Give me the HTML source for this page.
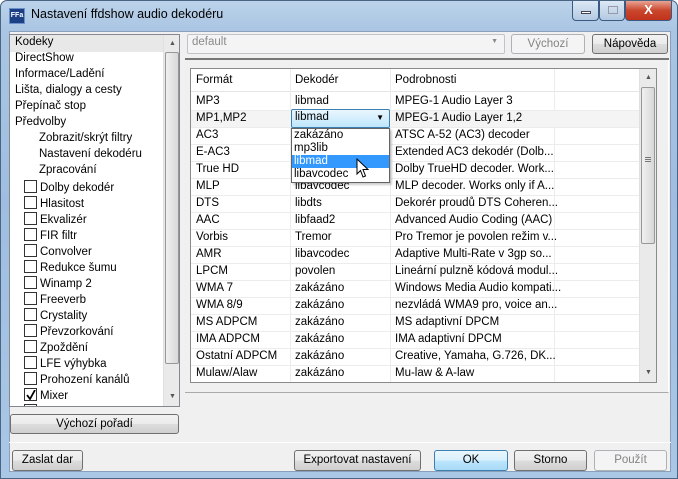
<!DOCTYPE html>
<html><head><meta charset="utf-8"><style>
*{box-sizing:border-box}
body{margin:0;width:678px;height:479px;overflow:hidden;font-family:"Liberation Sans",sans-serif;font-size:11.5px;color:#000;background:#fff}
.frame{position:absolute;left:0;top:0;width:678px;height:479px;background:linear-gradient(180deg,#bcd3ea 0,#a9c5e3 30px,#9fbde0 200px,#aac7e6 479px);border:1px solid #4a6583;border-radius:7px 7px 0 0}
.title{position:absolute;left:30px;top:6px;font-size:12.5px;color:#000}
.icon{position:absolute;left:8px;top:7px;width:16px;height:16px;background:#1d3f86;border:1px solid #6b8fc8;color:#fff;font-size:7px;font-weight:bold;line-height:14px;text-align:center}
.client{position:absolute;left:8px;top:30px;width:662px;height:441px;background:#f0f0f0;border:1px solid #8aa0ba}
.abs{position:absolute}
.btn{position:absolute;border:1px solid #707070;border-radius:3px;background:linear-gradient(#f2f2f2 0,#ebebeb 50%,#dddddd 51%,#cfcfcf 100%);text-align:center;font-size:11.5px;line-height:18px}
.btn.dis{border-color:#adb2b5;background:#f4f4f4;color:#838383}
.list{position:absolute;background:#fff;border:1px solid #828790}
.li{position:absolute;white-space:nowrap}
.cb{display:inline-block;width:13px;height:13px;border:1px solid #333;background:#fff;vertical-align:-2px;margin-right:3px;position:relative}
.sb{position:absolute;background:#eaeaea;border-left:1px solid #e0e0e0}
.thumb{position:absolute;left:1px;width:14px;border:1px solid #979797;border-radius:2px;background:linear-gradient(90deg,#f0f0f0,#d8d8d8)}
.row{position:absolute;left:0;width:448px;height:17px;border-bottom:1px solid #ececec}
.row span{position:absolute;top:1px;white-space:nowrap}
.wb{position:absolute;top:0;height:20px;border:1px solid #3b5a82;border-top:none;border-radius:0 0 4px 4px}
</style></head><body>
<div class="frame">
 <div class="icon">FFa</div>
 <div class="title">Nastavení ffdshow audio dekodéru</div>
 <div class="wb" style="left:571px;width:27px;background:linear-gradient(#dce8f5,#b3c9e2)"><div class="abs" style="left:8px;top:10px;width:10px;height:3px;background:#fff;border:1px solid #445"></div></div>
 <div class="wb" style="left:598px;width:26px;background:linear-gradient(#dce8f5,#b3c9e2)"><div class="abs" style="left:8px;top:5px;width:10px;height:8px;border:1px solid #99a"></div></div>
 <div class="wb" style="left:624px;width:47px;background:linear-gradient(#e8a393,#c9462c 50%,#c2321b);color:#fff;font-weight:bold;text-align:center;font-size:13px;line-height:18px">X</div>
 <div class="client"></div>
 <div class="list" style="left:8px;top:33px;width:171px;height:373px;overflow:hidden">
  <div class="abs" style="left:0;top:0;width:153px;height:17px;background:#e8e8e8"></div>
  <div class="li" style="left:5px;top:1px">Kodeky</div>
  <div class="li" style="left:5px;top:17px">DirectShow</div>
  <div class="li" style="left:5px;top:33px">Informace/Ladění</div>
  <div class="li" style="left:5px;top:49px">Lišta, dialogy a cesty</div>
  <div class="li" style="left:5px;top:65px">Přepínač stop</div>
  <div class="li" style="left:5px;top:81px">Předvolby</div>
  <div class="li" style="left:29px;top:97px">Zobrazit/skrýt filtry</div>
  <div class="li" style="left:29px;top:113px">Nastavení dekodéru</div>
  <div class="li" style="left:29px;top:129px">Zpracování</div>
  <div class="li" style="left:14px;top:145px"><span class="cb"></span>Dolby dekodér</div>
  <div class="li" style="left:14px;top:161px"><span class="cb"></span>Hlasitost</div>
  <div class="li" style="left:14px;top:177px"><span class="cb"></span>Ekvalizér</div>
  <div class="li" style="left:14px;top:193px"><span class="cb"></span>FIR filtr</div>
  <div class="li" style="left:14px;top:209px"><span class="cb"></span>Convolver</div>
  <div class="li" style="left:14px;top:225px"><span class="cb"></span>Redukce šumu</div>
  <div class="li" style="left:14px;top:241px"><span class="cb"></span>Winamp 2</div>
  <div class="li" style="left:14px;top:257px"><span class="cb"></span>Freeverb</div>
  <div class="li" style="left:14px;top:273px"><span class="cb"></span>Crystality</div>
  <div class="li" style="left:14px;top:289px"><span class="cb"></span>Převzorkování</div>
  <div class="li" style="left:14px;top:305px"><span class="cb"></span>Zpoždění</div>
  <div class="li" style="left:14px;top:321px"><span class="cb"></span>LFE výhybka</div>
  <div class="li" style="left:14px;top:337px"><span class="cb"></span>Prohození kanálů</div>
  <div class="li" style="left:14px;top:353px"><span class="cb"><svg class="abs" style="left:1px;top:1px" width="10" height="10" viewBox="0 0 10 10"><path d="M1 5 L4 9 L9 0" fill="none" stroke="#000" stroke-width="1.8"/></svg></span>Mixer</div>
  <div class="li" style="left:14px;top:369px"><span class="cb"></span>OSD</div>
  <div class="sb" style="left:153px;top:0;width:17px;height:371px">
   <div class="abs" style="left:5px;top:5px;font-size:7px;color:#555">▲</div>
   <div class="thumb" style="top:17px;height:312px"></div>
   <div class="abs" style="left:5px;top:358px;font-size:7px;color:#555">▼</div>
  </div>
 </div>
 <div class="btn" style="left:9px;top:413px;width:169px;height:20px">Výchozí pořadí</div>
 <div class="abs" style="left:8px;top:441px;width:662px;height:1px;background:#c8c8c8;border-bottom:1px solid #fff"></div>
 <div class="abs" style="left:186px;top:33px;width:318px;height:20px;border:1px solid #c0c4c8;border-radius:2px;background:#f4f4f4;color:#8a8a8a;padding:1px 4px">default<span class="abs" style="right:6px;top:3px;font-size:7px">▼</span></div>
 <div class="btn dis" style="left:510px;top:33px;width:74px;height:20px">Výchozí</div>
 <div class="btn" style="left:591px;top:33px;width:76px;height:20px">Nápověda</div>
 <div class="abs" style="left:184px;top:57px;width:484px;height:2px;background:#777"></div>
 <div class="abs" style="left:184px;top:59px;width:484px;height:333px;border-right:1px solid #fff;border-bottom:1px solid #aaa"></div>
 <div class="list" style="left:189px;top:67px;width:467px;height:315px;overflow:hidden;border-color:#8a8a8a">
  <div class="abs" style="left:0;top:0;width:448px;height:23px;background:#fff;border-bottom:1px solid #e5e5e5"></div>
  <div class="abs" style="left:99px;top:0;width:1px;height:315px;background:#ececec"></div>
  <div class="abs" style="left:199px;top:0;width:1px;height:315px;background:#ececec"></div>
  <div class="abs" style="left:363px;top:0;width:1px;height:315px;background:#ececec"></div>
  <div class="li" style="left:5px;top:5px">Formát</div>
  <div class="li" style="left:104px;top:5px">Dekodér</div>
  <div class="li" style="left:204px;top:5px">Podrobnosti</div>
  <div class="row" style="top:25px"><span style="left:5px">MP3</span><span style="left:104px">libmad</span><span style="left:204px">MPEG-1 Audio Layer 3</span></div>
  <div class="row" style="top:42px;background:#f4f4f4"><span style="left:5px">MP1,MP2</span><span style="left:204px">MPEG-1 Audio Layer 1,2</span></div>
  <div class="row" style="top:59px"><span style="left:5px">AC3</span><span style="left:204px">ATSC A-52 (AC3) decoder</span></div>
  <div class="row" style="top:76px"><span style="left:5px">E-AC3</span><span style="left:204px">Extended AC3 dekodér (Dolb...</span></div>
  <div class="row" style="top:93px"><span style="left:5px">True HD</span><span style="left:204px">Dolby TrueHD decoder. Work...</span></div>
  <div class="row" style="top:110px"><span style="left:5px">MLP</span><span style="left:104px">libavcodec</span><span style="left:204px">MLP decoder. Works only if A...</span></div>
  <div class="row" style="top:127px"><span style="left:5px">DTS</span><span style="left:104px">libdts</span><span style="left:204px">Dekorér proudů DTS Coheren...</span></div>
  <div class="row" style="top:144px"><span style="left:5px">AAC</span><span style="left:104px">libfaad2</span><span style="left:204px">Advanced Audio Coding (AAC)</span></div>
  <div class="row" style="top:161px"><span style="left:5px">Vorbis</span><span style="left:104px">Tremor</span><span style="left:204px">Pro Tremor je povolen režim v...</span></div>
  <div class="row" style="top:178px"><span style="left:5px">AMR</span><span style="left:104px">libavcodec</span><span style="left:204px">Adaptive Multi-Rate v 3gp so...</span></div>
  <div class="row" style="top:195px"><span style="left:5px">LPCM</span><span style="left:104px">povolen</span><span style="left:204px">Lineární pulzně kódová modul...</span></div>
  <div class="row" style="top:212px"><span style="left:5px">WMA 7</span><span style="left:104px">zakázáno</span><span style="left:204px">Windows Media Audio kompati...</span></div>
  <div class="row" style="top:229px"><span style="left:5px">WMA 8/9</span><span style="left:104px">zakázáno</span><span style="left:204px">nezvládá WMA9 pro, voice an...</span></div>
  <div class="row" style="top:246px"><span style="left:5px">MS ADPCM</span><span style="left:104px">zakázáno</span><span style="left:204px">MS adaptivní DPCM</span></div>
  <div class="row" style="top:263px"><span style="left:5px">IMA ADPCM</span><span style="left:104px">zakázáno</span><span style="left:204px">IMA adaptivní DPCM</span></div>
  <div class="row" style="top:280px"><span style="left:5px">Ostatní ADPCM</span><span style="left:104px">zakázáno</span><span style="left:204px">Creative, Yamaha, G.726, DK...</span></div>
  <div class="row" style="top:297px"><span style="left:5px">Mulaw/Alaw</span><span style="left:104px">zakázáno</span><span style="left:204px">Mu-law &amp; A-law</span></div>
  <div class="sb" style="left:448px;top:0;width:17px;height:313px">
   <div class="abs" style="left:5px;top:5px;font-size:7px;color:#555">▲</div>
   <div class="thumb" style="top:18px;height:157px"></div>
   <div class="abs" style="left:5px;top:88px;width:6px;height:5px;border-top:1px solid #777;border-bottom:1px solid #777"></div>
   <div class="abs" style="left:5px;top:90px;width:6px;height:1px;background:#777"></div>
   <div class="abs" style="left:5px;top:300px;font-size:7px;color:#555">▼</div>
  </div>
 </div>
 <div class="abs" style="left:290px;top:108px;width:99px;height:19px;border:1px solid #3c7fb1;border-radius:2px;background:linear-gradient(#eaf6fd,#bee6fd);padding:1px 3px">libmad<span class="abs" style="right:5px;top:3px;font-size:8px">▼</span></div>
 <div class="abs" style="left:290px;top:127px;width:99px;height:55px;border:1px solid #646464;background:#fff;line-height:13px;box-shadow:2px 2px 2px rgba(0,0,0,.2)">
  <div style="padding-left:2px">zakázáno</div>
  <div style="padding-left:2px">mp3lib</div>
  <div style="padding-left:2px;background:#3399ff;color:#fff">libmad</div>
  <div style="padding-left:2px">libavcodec</div>
 </div>
 <svg class="abs" style="left:355px;top:157px" width="14" height="22" viewBox="0 0 14 22"><path d="M1 1 L1 16 L4.5 12.5 L7 19 L9.5 18 L7 11.5 L12 11.5 Z" fill="#fff" stroke="#000" stroke-width="1"/></svg>
 <div class="btn" style="left:11px;top:449px;width:71px;height:21px">Zaslat dar</div>
 <div class="btn" style="left:293px;top:449px;width:127px;height:21px">Exportovat nastavení</div>
 <div class="btn" style="left:433px;top:449px;width:74px;height:21px;border-color:#3c7fb1;background:linear-gradient(#eaf6fd,#d9f0fc 50%,#bee6fd 51%,#a7d9f5)">OK</div>
 <div class="btn" style="left:513px;top:449px;width:73px;height:21px">Storno</div>
 <div class="btn dis" style="left:593px;top:449px;width:73px;height:21px">Použít</div>
</div>
</body></html>
